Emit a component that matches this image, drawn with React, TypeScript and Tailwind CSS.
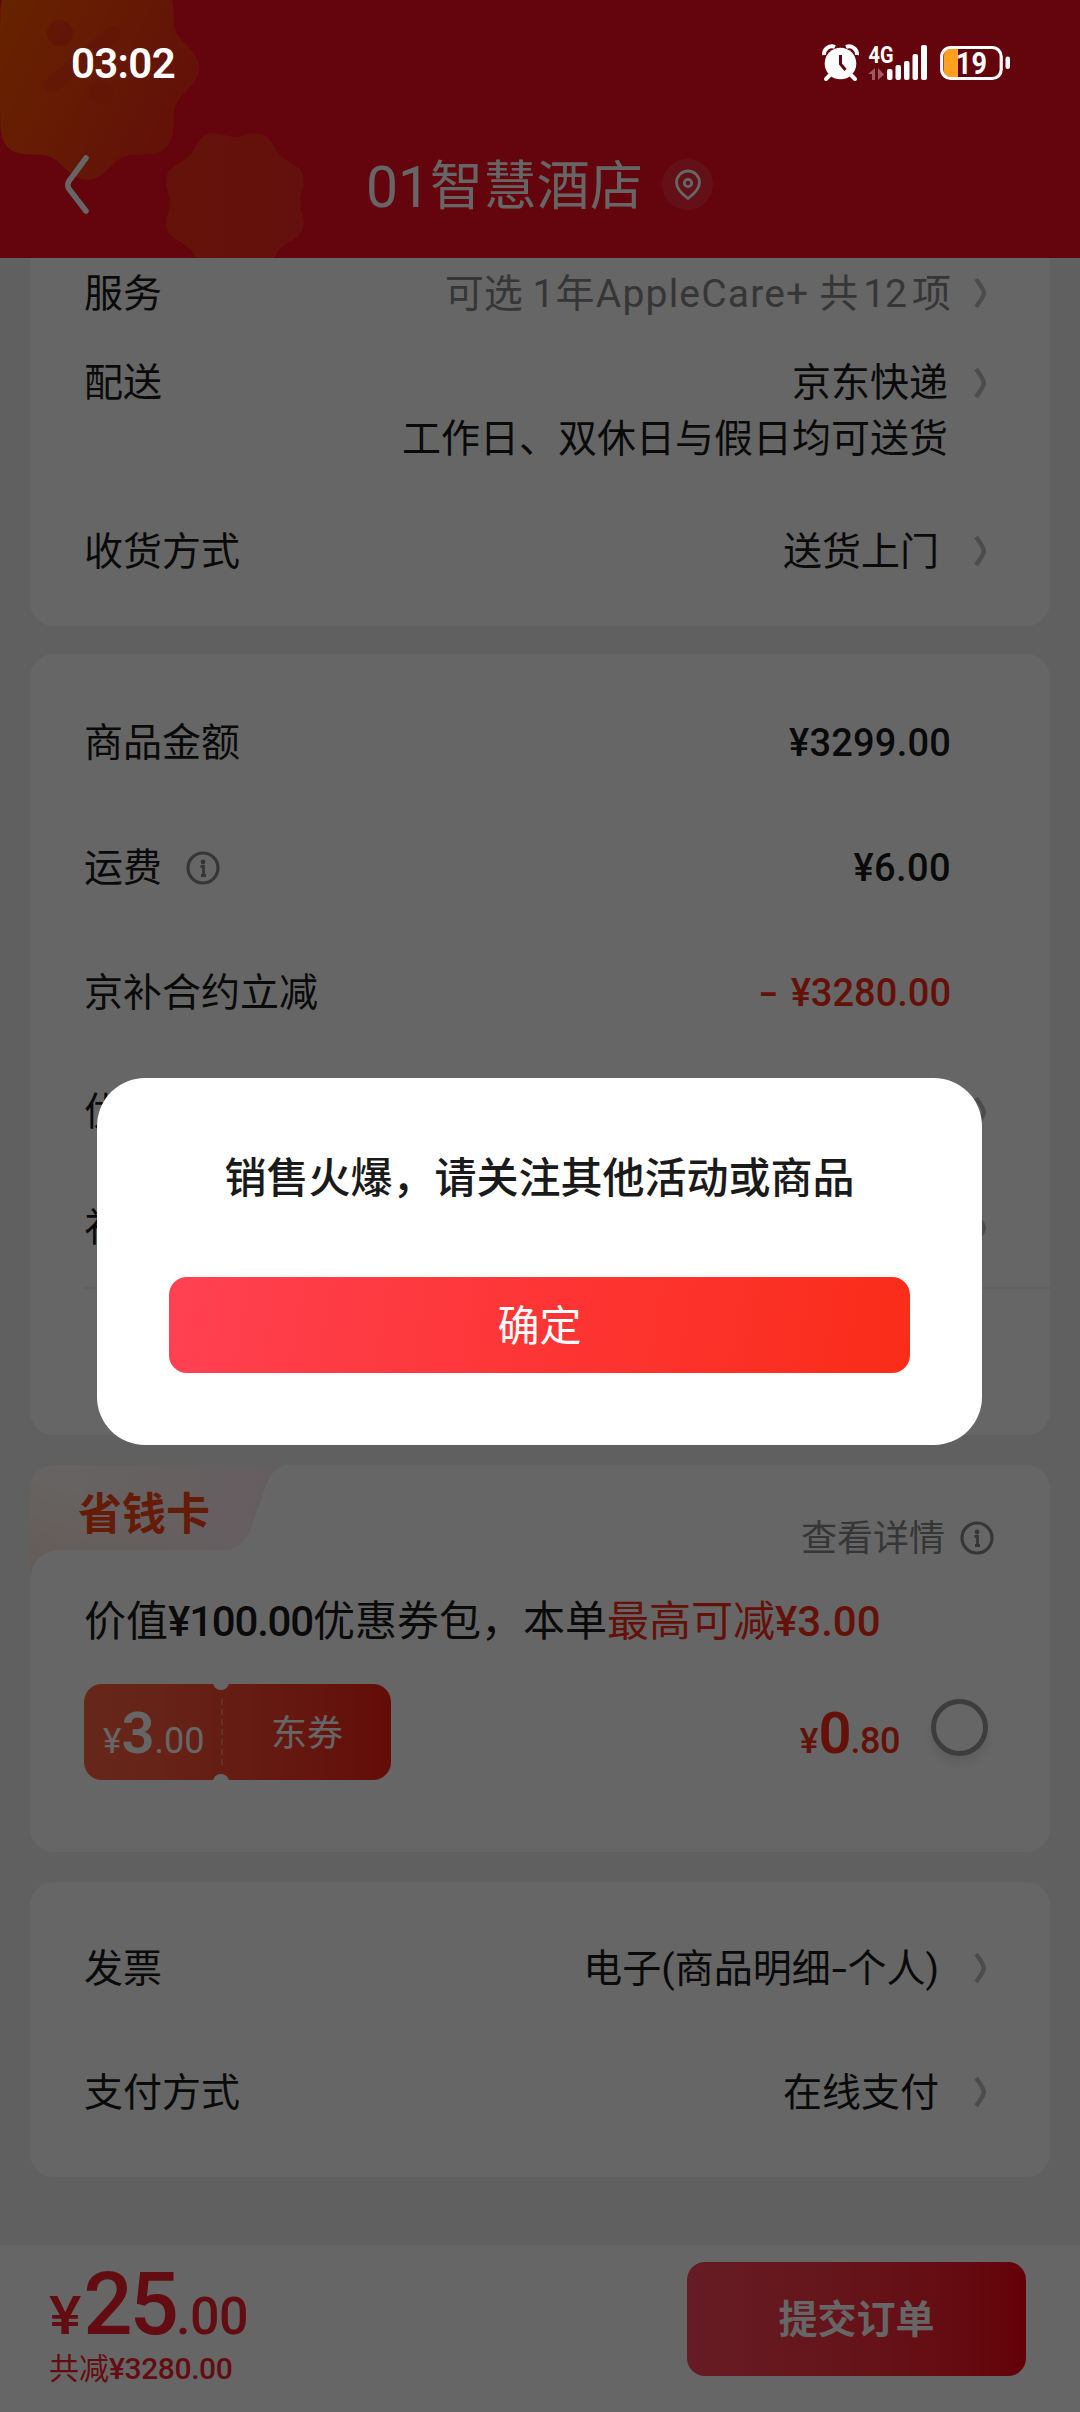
import type { ReactNode } from "react";

function scallop(cx: number, cy: number, r: number, amp: number, phase: number) {
  const points: string[] = [];
  for (let i = 0; i < 180; i++) {
    const a = (i / 180) * Math.PI * 2;
    const d = r + amp * Math.cos(8 * a + phase);
    points.push(`${(cx + d * Math.cos(a)).toFixed(1)} ${(cy + d * Math.sin(a)).toFixed(1)}`);
  }
  return `M${points.join("L")}Z`;
}

function Arrow() {
  return (
    <svg width="14" height="32" viewBox="0 0 14 32" fill="none" className="shrink-0">
      <path d="M2 2 Q9.500 12 10 16 Q9.500 20 2 30" stroke="#bebebe" strokeWidth="4.500" strokeLinejoin="round" />
    </svg>
  );
}

function InfoIcon() {
  return (
    <svg width="34" height="34" viewBox="0 0 34 34" fill="none" className="-mt-[2px] shrink-0">
      <circle cx="17" cy="17" r="15" stroke="#888888" strokeWidth="3.200" />
      <circle cx="17" cy="11" r="2.400" fill="#888888" />
      <path d="M14.500 15.500h3V24M15 24.500h5" stroke="#888888" strokeWidth="2.800" />
    </svg>
  );
}

function Card({ className, children }: { className: string; children: ReactNode }) {
  return <section className={`w-full shrink-0 rounded-[24px] bg-white ${className}`}>{children}</section>;
}

function Row({
  label,
  className,
  arrow,
  children,
}: {
  label: ReactNode;
  className: string;
  arrow?: boolean;
  children?: ReactNode;
}) {
  return (
    <div className={`flex items-center pl-[54px] ${arrow ? "pr-[62px]" : "pr-[99px]"} ${className}`}>
      <div className="flex items-center gap-[24px] pt-[2px]">{label}</div>
      <div className={`ml-auto flex items-center ${arrow ? "pt-[2px]" : ""}`}>{children}</div>
      {arrow && <Arrow />}
    </div>
  );
}

function Header() {
  return (
    <header className="relative flex h-[258px] shrink-0 items-end overflow-hidden bg-[#fa0d21]">
      <svg className="absolute left-0 top-0" width="320" height="258" viewBox="0 0 320 258" fill="none">
        <defs>
          <linearGradient id="badgeBig" x1="0" y1="20" x2="190" y2="110" gradientUnits="userSpaceOnUse">
            <stop stopColor="#ff5800" />
            <stop offset="1" stopColor="#fa2a18" />
          </linearGradient>
          <linearGradient id="badgeSmall" x1="165" y1="200" x2="305" y2="200" gradientUnits="userSpaceOnUse">
            <stop stopColor="#fc3018" />
            <stop offset="1" stopColor="#fa2824" />
          </linearGradient>
        </defs>
        <path d={scallop(87, 68, 104, 8, 0)} fill="url(#badgeBig)" />
        <g fill="#f02a18">
          <circle cx="60" cy="33" r="13" opacity="0.6" />
          <circle cx="102" cy="93" r="12" opacity="0.35" />
          <path d="M52 85L113 34" stroke="#f02a18" strokeWidth="16" strokeLinecap="round" opacity="0.35" />
        </g>
        <path d={scallop(235, 202, 69, 4, Math.PI)} fill="url(#badgeSmall)" />
      </svg>
      <div className="relative flex h-[147px] w-full items-center">
        <svg className="ml-[60px]" width="32" height="64" viewBox="0 0 32 64" fill="none">
          <path d="M26 5L9 28Q6.500 32 9 36L26 58" stroke="#fff" strokeWidth="5.500" strokeLinecap="round" />
        </svg>
        <h1 className="ml-[274px] flex items-center pt-[5px] text-[53px] leading-none text-white">
          <span className="text-[57px]">01</span>
          <span className="tracking-[0.300px]">智慧酒店</span>
        </h1>
        <div className="ml-[19px] flex size-[51px] items-center justify-center rounded-full bg-white/12">
          <svg width="28" height="32" viewBox="0 0 28 32" fill="none" stroke="#fff" strokeWidth="2.800">
            <path d="M14 29.500C18 26.500 25.500 20 25.500 13.500A11.500 11.500 0 0 0 2.500 13.500C2.500 20 10 26.500 14 29.500Z" strokeLinejoin="round" />
            <circle cx="14" cy="14" r="3.700" />
          </svg>
        </div>
      </div>
    </header>
  );
}

function StatusBar() {
  return (
    <div className="absolute inset-x-0 top-0 flex h-[126px] items-center pl-[71px] pr-[69px] text-white">
      <span className="pt-[2px] text-[42px] font-semibold leading-none tracking-[-0.700px]">03:02</span>
      <svg className="ml-auto" width="190" height="60" viewBox="821 33 190 60" fill="none">
        <path d="M824 55a8 8 0 0 1 11-8M857 55a8 8 0 0 0-11-8" stroke="#fff" strokeWidth="4" />
        <circle cx="840.500" cy="63.500" r="15.800" fill="#fff" />
        <path d="M831 74l-5 5M850 74l5 5" stroke="#fff" strokeWidth="4" strokeLinecap="round" />
        <path d="M840.500 55v9l5 6" stroke="#64050d" strokeWidth="3" />
        <text x="868.500" y="62.500" fill="#fff" fontSize="23.500" fontWeight="700" textLength="25" lengthAdjust="spacingAndGlyphs">
          4G
        </text>
        <path d="M875 68v12h-3v-6h-4zM878 68v12l6-5.500z" fill="#fff" opacity="0.35" />
        <g fill="#fff">
          <rect x="887" y="69" width="5.500" height="11" rx="2" />
          <rect x="895.500" y="65" width="5.500" height="15" rx="2" />
          <rect x="904" y="61" width="5.500" height="19" rx="2" />
          <rect x="912.500" y="54" width="5.500" height="26" rx="2" />
          <rect x="921" y="45" width="6" height="35" rx="2" />
          <rect x="1005.500" y="56.500" width="4.500" height="12.500" rx="2.200" />
        </g>
        <path d="M950 49h8v28h-8a6 6 0 0 1-6-6v-16a6 6 0 0 1 6-6z" fill="#ffa01e" />
        <rect x="941.700" y="47.500" width="59.500" height="31" rx="9" stroke="#fff" strokeWidth="3.200" />
        <text x="956" y="74" fill="#fff" fontSize="31" fontWeight="700" textLength="31" lengthAdjust="spacingAndGlyphs">
          19
        </text>
      </svg>
    </div>
  );
}

function DeliveryCard() {
  return (
    <Card className="h-[368px] rounded-t-none">
      <Row label="服务" className="h-[70px]" arrow>
        <span className="mr-[23px] text-[#888888]">
          可选 <span className="tracking-[1.200px]">1年AppleCare+</span> 共<span className="mx-[5px]">12</span>项
        </span>
      </Row>
      <div className="flex pl-[54px] pr-[62px] pt-[27px] leading-[56px]">
        <span>配送</span>
        <div className="ml-auto mr-[26px] flex flex-col items-end">
          <span>京东快递</span>
          <span>工作日、双休日与假日均可送货</span>
        </div>
        <div className="flex h-[56px] items-center">
          <Arrow />
        </div>
      </div>
      <Row label="收货方式" className="mt-[49px] h-[70px]" arrow>
        <span className="mr-[35px]">送货上门</span>
      </Row>
    </Card>
  );
}

function AmountCard() {
  return (
    <Card className="mt-[28px] h-[781px] pt-[26px]">
      <Row label="商品金额" className="h-[125px]">
        <span className="text-[38px] font-medium tracking-[0.200px]">¥3299.00</span>
      </Row>
      <Row
        label={
          <>
            运费
            <InfoIcon />
          </>
        }
        className="h-[125px]"
      >
        <span className="text-[38px] font-medium tracking-[0.400px]">¥6.00</span>
      </Row>
      <Row label="京补合约立减" className="h-[125px]">
        <span className="flex gap-[16px] text-[38px] font-medium text-[#fa2c19]">
          <span className="inline-block scale-x-150">-</span>
          <span>¥3280.00</span>
        </span>
      </Row>
      <Row label="优惠券" className="h-[113px]" arrow />
      <Row label="礼品卡" className="h-[119px]" arrow />
      <div className="ml-[54px] h-[2px] bg-[#f0f0f0]" />
    </Card>
  );
}

function SavingCard() {
  return (
    <Card className="relative mt-[30px] h-[387px] overflow-hidden">
      <svg className="absolute left-0 top-0" width="260" height="116" viewBox="0 0 260 116">
        <defs>
          <linearGradient id="tabFill" x1="40" y1="0" x2="230" y2="40" gradientUnits="userSpaceOnUse">
            <stop stopColor="#fff8f4" />
            <stop offset="1" stopColor="#fdeaf2" />
          </linearGradient>
          <linearGradient id="tabGlow" x1="0" y1="110" x2="30" y2="20" gradientUnits="userSpaceOnUse">
            <stop stopColor="#ffe2da" />
            <stop offset="1" stopColor="#ffe2da" stopOpacity="0" />
          </linearGradient>
        </defs>
        <path d="M0 0H257Q243 3 237 18L222 60Q214 85 194 85H30Q4 86 0 114Z" fill="url(#tabFill)" />
        <path d="M0 0H257Q243 3 237 18L222 60Q214 85 194 85H30Q4 86 0 114Z" fill="url(#tabGlow)" />
      </svg>
      <div className="relative flex h-[116px] pl-[48px] pr-[56px]">
        <h2 className="mt-[28px] text-[44px] font-bold leading-none text-[#fa4616]">省钱卡</h2>
        <div className="ml-auto mt-[56px] flex h-[36px] items-center gap-[15px] text-[36px] leading-none text-[#888888]">
          查看详情
          <InfoIcon />
        </div>
      </div>
      <p className="flex h-[78px] items-center whitespace-pre pl-[54px] pt-[3px] text-[42px] leading-none">
        价值
        <span className="font-medium tracking-[-1.200px]">¥100.00</span>
        优惠券包，本单
        <span className="text-[#fa2c19]">最高可减</span>
        <span className="font-medium text-[#fa2c19]">¥3.00</span>
      </p>
      <div className="relative mt-[25px] flex items-center pl-[54px] pr-[62px]">
        <div className="relative flex h-[96px] w-[307px] overflow-hidden rounded-[18px] bg-linear-to-r from-[#ff6444] to-[#fa1e14] text-white">
          <div className="flex w-[137px] items-baseline pl-[19px] pt-[20px] leading-none">
            <span className="text-[35px]">¥</span>
            <span className="text-[58px] font-semibold leading-none">3</span>
            <span className="text-[36px]">.00</span>
          </div>
          <div className="my-[15px] border-l-2 border-dashed border-white/25" />
          <span className="flex-1 pt-[32px] pl-[48px] text-[36px] leading-none">东券</span>
          <i className="absolute left-[129px] top-[-10px] size-[16px] rounded-full bg-white" />
          <i className="absolute left-[129px] bottom-[-10px] size-[16px] rounded-full bg-white" />
        </div>
        <div className="ml-auto flex items-baseline pt-[2px] leading-none text-[#fa2c19]">
          <span className="text-[35px] font-medium">¥</span>
          <span className="text-[58px] font-semibold leading-none tracking-[-1px]">0</span>
          <span className="text-[36px] font-medium tracking-[-0.500px]">.80</span>
        </div>
        <div className="-mt-[10px] ml-[31px] size-[57px] rounded-full border-[5px] border-[#999999] shadow-[0_8px_10px_rgba(0,0,0,0.08)]" />
      </div>
    </Card>
  );
}

function PaymentCard() {
  return (
    <Card className="mt-[30px] h-[295px] pt-[24px]">
      <Row label="发票" className="h-[124px]" arrow>
        <span className="mr-[35px]">
          电子(商品明细<span className="mx-[3px] inline-block scale-x-140">-</span>个人)
        </span>
      </Row>
      <Row label="支付方式" className="h-[124px]" arrow>
        <span className="mr-[35px]">在线支付</span>
      </Row>
    </Card>
  );
}

function SubmitBar() {
  return (
    <footer className="flex h-[167px] shrink-0 bg-white pl-[49px] pr-[54px] text-[#f81e2c]">
      <div>
        <div className="flex h-[93px] items-baseline pt-[16px] leading-none">
          <span className="origin-left scale-x-115 text-[53px] font-medium leading-none">¥</span>
          <span className="ml-[6px] text-[87px] font-medium leading-none tracking-[-3px]">25</span>
          <span className="text-[52px] font-medium leading-none tracking-[-0.500px]">.00</span>
        </div>
        <div className="flex items-center pt-[16px] text-[30px] leading-none">
          共减<span className="font-medium tracking-[-0.400px]">¥3280.00</span>
        </div>
      </div>
      <button className="ml-auto mt-[17px] h-[114px] w-[339px] rounded-[18px] bg-linear-to-r from-[#ff475d] to-[#fa0016] pt-[2px] text-[39px] font-bold text-white">
        提交订单
      </button>
    </footer>
  );
}

function Dialog() {
  return (
    <div className="absolute inset-0 bg-black/60">
      <div className="ml-[97px] mt-[1078px] flex h-[367px] w-[885px] flex-col items-center rounded-[48px] bg-white">
        <p className="mt-[80px] text-[42px] font-medium leading-[42px] text-[#1a1a1a]">销售火爆，请关注其他活动或商品</p>
        <button className="mt-[77px] h-[96px] w-[741px] rounded-[18px] bg-[linear-gradient(100deg,#ff4152_0%,#fd3535_50%,#fa2c19_100%)] pt-[3px] text-[42px] leading-none text-white">
          确定
        </button>
      </div>
    </div>
  );
}

export default function App() {
  return (
    <div className="relative flex h-[2412px] w-[1080px] flex-col overflow-hidden bg-[#f1f1f1] font-[Roboto,'Noto_Sans_CJK_SC',sans-serif] text-[39px] leading-none text-[#1a1a1a]">
      <Header />
      <main className="flex flex-1 flex-col overflow-hidden px-[30px]">
        <DeliveryCard />
        <AmountCard />
        <SavingCard />
        <PaymentCard />
      </main>
      <SubmitBar />
      <Dialog />
      <StatusBar />
    </div>
  );
}
